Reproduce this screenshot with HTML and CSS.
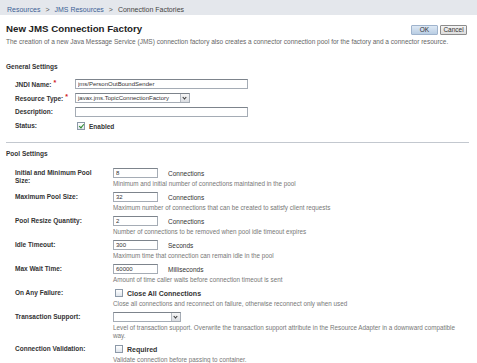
FILE: index.html
```html
<!DOCTYPE html>
<html lang="en">
<head>
    <meta charset="UTF-8">
    <title>New JMS Connection Factory</title>
    <link rel="stylesheet" href="styles.css">
</head>
<body>
    <div class="crumbs">
        <a href="#">Resources</a>
        <span class="sep">&gt;</span>
        <a href="#">JMS Resources</a>
        <span class="sep">&gt;</span>
        <span class="here">Connection Factories</span>
    </div>

    <div class="page">
        <div class="head">
            <h1>New JMS Connection Factory</h1>
            <div class="buttons">
                <button class="btn primary">OK</button>
                <button class="btn">Cancel</button>
            </div>
        </div>
        <p class="intro">The creation of a new Java Message Service (JMS) connection factory also creates a connector connection pool for the factory and a connector resource.</p>

        <h2 class="first">General Settings</h2>
        <div class="general">
            <div class="label">JNDI Name:<span class="req">*</span></div>
            <div class="field"><input class="text wide" type="text" value="jms/PersonOutBoundSender"></div>

            <div class="label">Resource Type:<span class="req">*</span></div>
            <div class="field">
                <span class="select long"><span class="val">javax.jms.TopicConnectionFactory</span><span class="arrow"></span></span>
            </div>

            <div class="label">Description:</div>
            <div class="field"><input class="text wide" type="text" value=""></div>

            <div class="label">Status:</div>
            <div class="field"><span class="check on"></span><span class="check-label">Enabled</span></div>
        </div>

        <hr class="rule">

        <h2>Pool Settings</h2>
        <div class="pool">
            <div class="label">Initial and Minimum Pool Size:</div>
            <div class="field">
                <div class="line"><input class="text short" type="text" value="8"><span class="unit">Connections</span></div>
                <div class="help">Minimum and initial number of connections maintained in the pool</div>
            </div>

            <div class="label">Maximum Pool Size:</div>
            <div class="field">
                <div class="line"><input class="text short" type="text" value="32"><span class="unit">Connections</span></div>
                <div class="help">Maximum number of connections that can be created to satisfy client requests</div>
            </div>

            <div class="label">Pool Resize Quantity:</div>
            <div class="field">
                <div class="line"><input class="text short" type="text" value="2"><span class="unit">Connections</span></div>
                <div class="help">Number of connections to be removed when pool idle timeout expires</div>
            </div>

            <div class="label">Idle Timeout:</div>
            <div class="field">
                <div class="line"><input class="text short" type="text" value="300"><span class="unit">Seconds</span></div>
                <div class="help">Maximum time that connection can remain idle in the pool</div>
            </div>

            <div class="label">Max Wait Time:</div>
            <div class="field">
                <div class="line"><input class="text short" type="text" value="60000"><span class="unit">Milliseconds</span></div>
                <div class="help">Amount of time caller waits before connection timeout is sent</div>
            </div>

            <div class="label">On Any Failure:</div>
            <div class="field">
                <div class="line"><span class="check"></span><span class="check-label big">Close All Connections</span></div>
                <div class="help">Close all connections and reconnect on failure, otherwise reconnect only when used</div>
            </div>

            <div class="label">Transaction Support:</div>
            <div class="field">
                <div class="line"><span class="select small"><span class="val"></span><span class="arrow"></span></span></div>
                <div class="help">Level of transaction support. Overwrite the transaction support attribute in the Resource Adapter in a downward compatible way.</div>
            </div>

            <div class="label">Connection Validation:</div>
            <div class="field">
                <div class="line"><span class="check"></span><span class="check-label big">Required</span></div>
                <div class="help">Validate connection before passing to container.</div>
            </div>
        </div>
    </div>
</body>
</html>
```

FILE: styles.css
```css
body {
    margin: 0;
    font-family: "Liberation Sans", Arial, sans-serif;
    background: #fff;
    color: #333;
}
.crumbs {
    height: 15px;
    box-sizing: border-box;
    padding: 6px 0 0 7px;
    background: #e4e7ec;
    font-size: 7px;
    line-height: 8px;
    color: #444;
}
.crumbs a {
    color: #3d5f96;
    text-decoration: none;
}
.crumbs .sep {
    margin: 0 3px;
    color: #555;
}
.page {
    padding: 0 8px 0 6px;
}
.head {
    display: flex;
    justify-content: space-between;
    align-items: center;
    margin-top: 8px;
    padding-right: 2px;
}
h1 {
    margin: 0;
    font-size: 9.7px;
    line-height: 12px;
    color: #222;
}
.buttons {
    display: flex;
    gap: 2px;
    margin-top: 2px;
}
.btn {
    width: 27px;
    height: 10px;
    padding: 0;
    font-family: inherit;
    font-size: 6.5px;
    line-height: 8px;
    color: #333;
    background: linear-gradient(#f4f4f4, #dcdcdc);
    border: 1px solid #8c8c8c;
    border-radius: 1px;
}
.btn.primary {
    background: linear-gradient(#dde8f4, #b9cde3);
    border-color: #9fb3cc;
}
.intro {
    margin: 3px 0 0;
    font-size: 6.5px;
    line-height: 8px;
    color: #666;
}
h2 {
    margin: 7px 0 0;
    font-size: 6.5px;
    line-height: 8px;
    color: #333;
}
h2.first {
    margin-top: 17px;
}
.label {
    font-size: 6.5px;
    font-weight: bold;
    line-height: 8px;
    color: #333;
}
.req {
    color: #d02020;
    font-size: 7px;
    vertical-align: 2px;
    margin-left: 2px;
}
.general {
    display: grid;
    grid-template-columns: 60px 1fr;
    row-gap: 4px;
    padding-left: 9px;
    margin-top: 8px;
    align-items: center;
}
.general .field {
    display: flex;
    align-items: center;
    height: 10px;
}
.text {
    box-sizing: border-box;
    height: 10px;
    padding: 0 2px;
    font-family: inherit;
    font-size: 6px;
    color: #333;
    border: 1px solid #a5acb5;
    border-top-color: #7d848c;
    background: #fff;
    outline: none;
}
.text.wide {
    width: 173px;
}
.text.short {
    width: 45px;
}
.select {
    box-sizing: border-box;
    display: inline-flex;
    height: 10px;
    border: 1px solid #a5acb5;
    border-top-color: #7d848c;
    background: #fff;
}
.select .val {
    font-size: 6px;
    line-height: 8px;
    padding: 0 2px;
    flex: 1;
    color: #333;
}
.select .arrow {
    width: 8px;
    border-left: 1px solid #b5bbc3;
    background: linear-gradient(#f6f6f6, #dadde2);
    position: relative;
}
.select .arrow::after {
    content: "";
    position: absolute;
    left: 2px;
    top: 2px;
    width: 2px;
    height: 2px;
    border-right: 1px solid #333;
    border-bottom: 1px solid #333;
    transform: rotate(45deg);
}
.select.long {
    width: 115px;
}
.select.small {
    width: 68px;
}
.check {
    box-sizing: border-box;
    display: inline-block;
    width: 8px;
    height: 8px;
    border: 1px solid #8c99a8;
    background: linear-gradient(#fff, #dfe5ec);
    margin: 0 4px 0 2px;
    position: relative;
}
.check.on::after {
    content: "";
    position: absolute;
    left: 2px;
    top: 0;
    width: 2px;
    height: 4px;
    border-right: 1px solid #2a8a2a;
    border-bottom: 1px solid #2a8a2a;
    transform: rotate(40deg);
}
.check-label {
    font-size: 6.5px;
    font-weight: bold;
    color: #333;
}
.check-label.big {
    font-size: 7px;
}
.rule {
    margin: 11px 0 0;
    border: 0;
    border-top: 1px solid #c3c8cf;
}
.pool {
    display: grid;
    grid-template-columns: 98px 1fr;
    row-gap: 4px;
    padding-left: 9px;
    margin-top: 10px;
}
.pool .label {
    padding-top: 1px;
    padding-right: 10px;
}
.line {
    display: flex;
    align-items: center;
    height: 10px;
}
.unit {
    margin-left: 10px;
    font-size: 6.5px;
    color: #333;
}
.help {
    margin-top: 2px;
    font-size: 6.3px;
    line-height: 8px;
    color: #777;
}
```
